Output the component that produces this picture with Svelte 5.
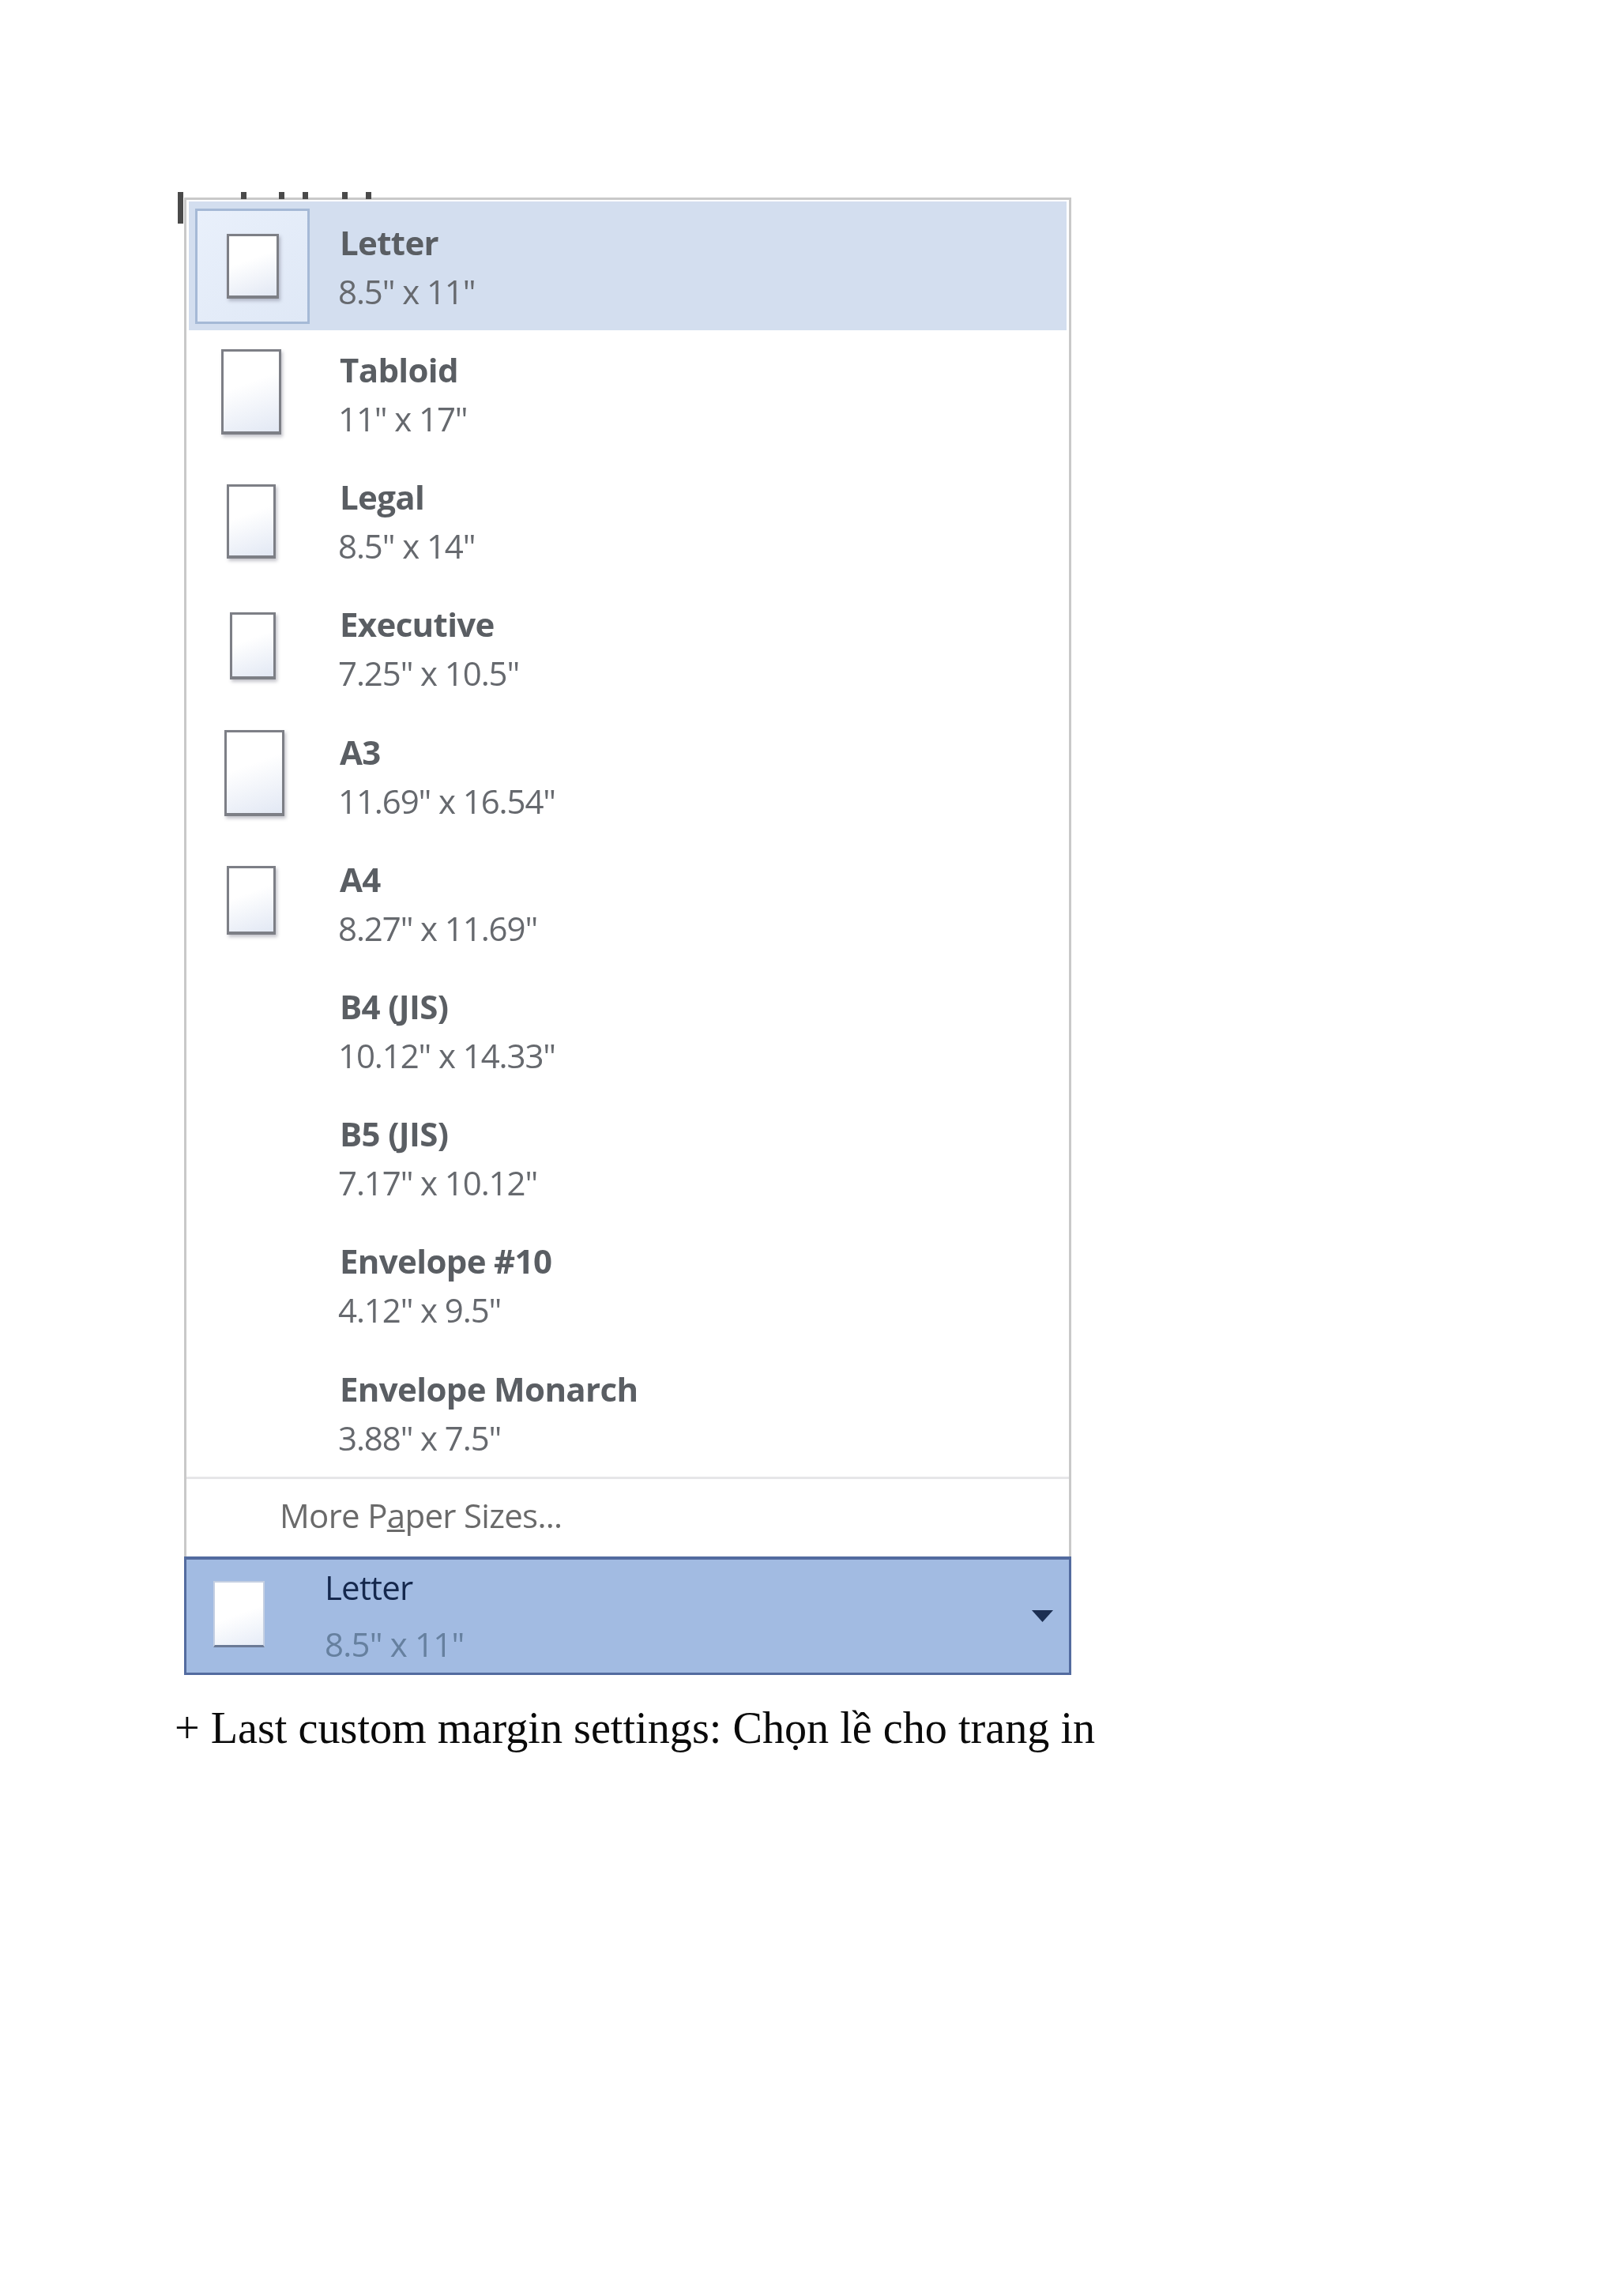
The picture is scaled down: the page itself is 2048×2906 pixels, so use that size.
<script>
  const papers = [
    { name: 'Letter', size: '8.5" x 11"', w: 66, h: 82, dx: 0, dy: 0, selected: true },
    { name: 'Tabloid', size: '11" x 17"', w: 76, h: 108, dx: 0, dy: -3 },
    { name: 'Legal', size: '8.5" x 14"', w: 62, h: 94, dx: 0, dy: 0 },
    { name: 'Executive', size: '7.25" x 10.5"', w: 58, h: 85, dx: 2, dy: -3 },
    { name: 'A3', size: '11.69" x 16.54"', w: 76, h: 109, dx: 4, dy: -4 },
    { name: 'A4', size: '8.27" x 11.69"', w: 62, h: 87, dx: 0, dy: -4 },
    { name: 'B4 (JIS)', size: '10.12" x 14.33"' },
    { name: 'B5 (JIS)', size: '7.17" x 10.12"' },
    { name: 'Envelope #10', size: '4.12" x 9.5"' },
    { name: 'Envelope Monarch', size: '3.88" x 7.5"' }
  ];
  const ticks = [305, 353, 383, 433, 463];
</script>

<div class="page">
  <div class="menu">
    <div class="bar"></div>
    {#each ticks as t}
      <div class="tick" style="left: {t - 236}px"></div>
    {/each}
    <div class="list">
      {#each papers as p}
        <div class="row" class:selected={p.selected}>
          <div class="thumb">
            {#if p.w}
              <div class="sheet" style="width: {p.w}px; height: {p.h}px; transform: translate({p.dx}px, {p.dy}px)"></div>
            {/if}
          </div>
          <div class="label">
            <div class="name">{p.name}</div>
            <div class="size">{p.size}</div>
          </div>
        </div>
      {/each}
    </div>
    <div class="more">More P<u>a</u>per Sizes...</div>
    <div class="current">
      <div class="cur-sheet"></div>
      <div class="cur-label">
        <div class="cur-name">Letter</div>
        <div class="cur-size">8.5" x 11"</div>
      </div>
      <svg class="caret" width="27" height="15" viewBox="0 0 27 15"><path d="M0 0h27L13.5 15z" fill="#1c2f52"/></svg>
    </div>
  </div>
  <p class="caption">+ Last custom margin settings: Chọn lề cho trang in</p>
</div>

<style>
  :global(body) { margin: 0; background: #fff; }
  .page { width: 2048px; height: 2906px; box-sizing: border-box; padding: 250px 0 0 221px; overflow: hidden; }
  .menu { position: relative; width: 1123px; margin-left: 12px; box-sizing: border-box; border: solid #c9c9c9; border-width: 3px 3px 0 3px; }
  .bar { position: absolute; left: -11px; top: -10px; width: 7px; height: 40px; background: #4a4a4a; filter: blur(0.6px); }
  .tick { position: absolute; top: -10px; width: 7px; height: 9px; background: #4a4a4a; filter: blur(0.6px); }
  .list { padding: 2px 3px 0 3px; }
  .row { height: 161.2px; display: flex; align-items: stretch; box-sizing: border-box; }
  .row.selected { background: #d3deef; height: 163px; }
  .thumb { width: 158px; margin-right: 33px; flex: none; display: flex; align-items: center; justify-content: center; box-sizing: border-box; }
  .selected .thumb { width: 145px; height: 146px; margin: 9px 38px 8px 8px; background: linear-gradient(135deg, #e9f0fb, #dfe8f6); border: 3px solid #a5b9d6; }
  .sheet { box-sizing: border-box; border: 3px solid #7d7f86; border-bottom-width: 4px; background: linear-gradient(160deg, #fff 40%, #e2e8f4); box-shadow: 2px 3px 4px rgba(90, 90, 110, 0.35); }
  .label { padding: 20px 0 0 0; filter: blur(0.7px); font-family: "Open Sans", sans-serif; }
  .selected .label { padding-top: 22px; }
  .name { font-size: 42px; line-height: 60px; font-weight: 700; color: #5a5e63; letter-spacing: -0.65px; }
  .size { font-size: 42px; line-height: 60px; margin: 2px 0 0 -2px; color: #66696e; letter-spacing: -1.1px; }
  .more { height: 101px; border-top: 3px solid #e6e6e8; box-sizing: border-box; padding: 16px 0 0 118px; font: 42px/60px "Open Sans", sans-serif; color: #6a6a6a; filter: blur(0.7px); letter-spacing: -0.7px; }
  .current { height: 150px; margin: 0 -3px; box-sizing: border-box; background: #a2bbe2; border: 3px solid #536b9f; border-top-width: 4px; display: flex; align-items: center; }
  .cur-sheet { width: 65px; height: 84px; margin: 0 0 4px 34px; flex: none; background: linear-gradient(160deg, #fff 50%, #e6ecf7); border: 2px solid #c4cfe2; border-bottom: 3px solid #6b7a96; box-sizing: border-box; }
  .cur-label { margin-left: 76px; font: 42px/72px "Open Sans", sans-serif; filter: blur(0.7px); flex: 1; letter-spacing: -0.8px; }
  .cur-name { color: #15284d; }
  .cur-size { color: #66809f; }
  .caret { margin-right: 20px; filter: blur(0.5px); }
  .caption { margin: 35px 0 0 0; font: 56.2px/1.15 "Liberation Serif", serif; color: #0a0a0a; white-space: nowrap; }
  u { text-decoration-thickness: 3px; }
</style>
